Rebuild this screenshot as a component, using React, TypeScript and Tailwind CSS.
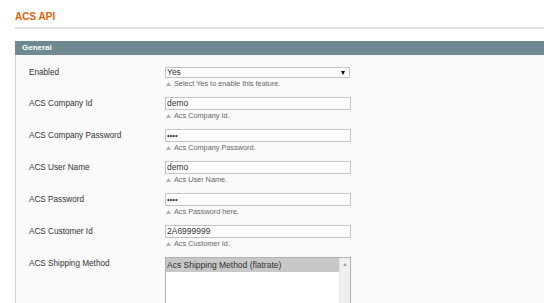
import React from "react";

function Hint({ text }: { text: string }) {
  return (
    <div className="flex h-[11px] items-center text-[7.3px] leading-[11px] text-[#666]">
      <svg width="5" height="4" viewBox="0 0 5 4" className="ml-[1px] mr-[3px]">
        <path d="M2.5 0 L5 4 L0 4 Z" fill="#b0b0b0" />
      </svg>
      <span>{text}</span>
    </div>
  );
}

function Label({ text }: { text: string }) {
  return <div className="h-[13px] text-[8.2px] leading-[14px] text-[#333]">{text}</div>;
}

function TextRow({ label, value, hint, pw }: { label: string; value: string; hint: string; pw?: boolean }) {
  return (
    <div className="grid grid-cols-[136px_186px] mb-[8px]">
      <Label text={label} />
      <div className="flex flex-col">
        <div className="flex h-[13px] items-center border border-[#c4c4c4] bg-white pl-[1px] text-[8.5px] text-[#2f2f2f]">
          {pw ? <span className="text-[7.5px] leading-[7px]">••••</span> : <span className="leading-[11px]">{value}</span>}
        </div>
        <Hint text={hint} />
      </div>
    </div>
  );
}

export default function App() {
  return (
    <div className="h-[303px] w-[544px] overflow-hidden bg-white font-['Liberation_Sans',Arial,sans-serif]">
      <div className="pl-[15px] pt-[11px]">
        <div className="h-[12px] text-[10px] font-bold leading-[12px] text-[#eb5e00]">ACS API</div>
        <div className="mt-[4px] h-[2px] bg-[#dedede]" />
        <div className="mt-[12px]">
          <div className="h-[14px] bg-[#6f8992] pl-[7px] text-[8px] font-bold leading-[14px] text-white">General</div>
          <div className="h-[260px] border-l border-[#d4d4d4] bg-[#fafafa] pl-[13px] pt-[12px]">
            <div className="grid grid-cols-[136px_185px] mb-[8px]">
              <div className="h-[11px] text-[8.2px] leading-[12px] text-[#333]">Enabled</div>
              <div className="flex flex-col">
                <div className="flex h-[11px] items-center justify-between border border-[#c4c4c4] bg-white pl-[1px] pr-[4px] text-[8.5px] text-[#2f2f2f]">
                  <span className="leading-[9px]">Yes</span>
                  <svg width="4" height="4" viewBox="0 0 4 4">
                    <path d="M0 0 L4 0 L2 4 Z" fill="#000" />
                  </svg>
                </div>
                <Hint text="Select Yes to enable this feature." />
              </div>
            </div>
            <TextRow label="ACS Company Id" value="demo" hint="Acs Company Id." />
            <TextRow label="ACS Company Password" value="" pw hint="Acs Company Password." />
            <TextRow label="ACS User Name" value="demo" hint="Acs User Name." />
            <TextRow label="ACS Password" value="" pw hint="Acs Password here." />
            <TextRow label="ACS Customer Id" value="2A6999999" hint="Acs Customer Id." />
            <div className="grid grid-cols-[136px_186px]">
              <Label text="ACS Shipping Method" />
              <div className="flex h-[70px] border border-[#b0b0b0] bg-white">
                <div className="flex-1">
                  <div className="h-[14px] bg-[#c8c8c8] pl-[1px] text-[8.5px] leading-[14px] text-[#2f2f2f]">
                    Acs Shipping Method (flatrate)
                  </div>
                </div>
                <div className="flex w-[11px] justify-center border-l border-[#e4e4e4] bg-[#f0f0f0] pt-[5px]">
                  <svg width="4" height="3" viewBox="0 0 4 3">
                    <path d="M2 0 L4 3 L0 3 Z" fill="#a0a0a0" />
                  </svg>
                </div>
              </div>
            </div>
          </div>
        </div>
      </div>
    </div>
  );
}
